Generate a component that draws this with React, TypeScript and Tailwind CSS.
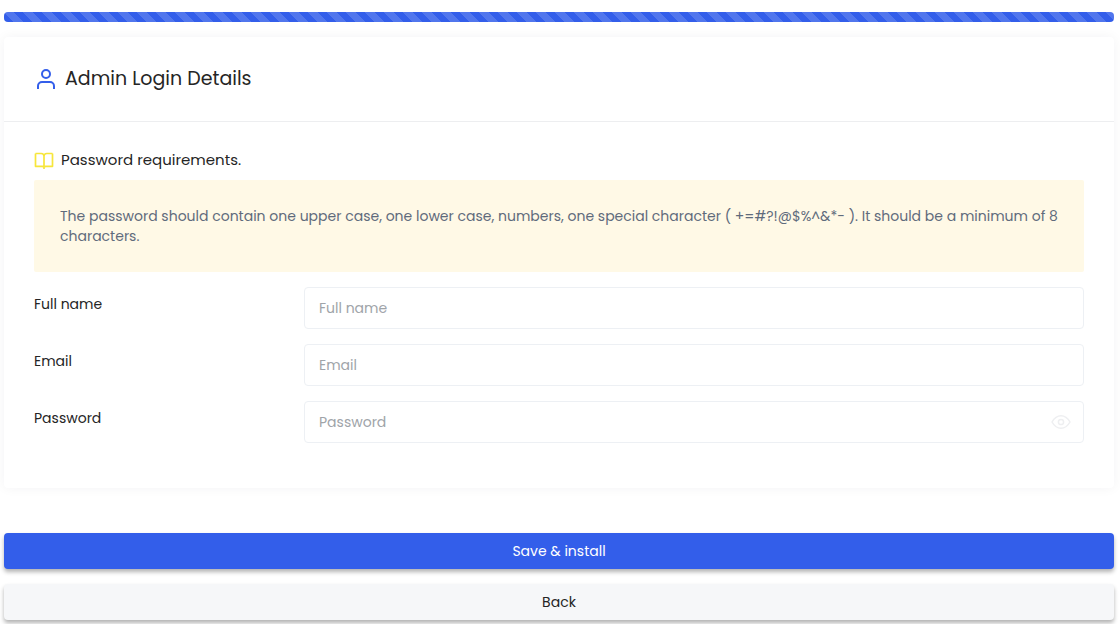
import { useState } from "react";

const fields = [
  { id: "name", label: "Full name", type: "text" },
  { id: "email", label: "Email", type: "email" },
  { id: "password", label: "Password", type: "password" },
];

function UserIcon() {
  return (
    <svg className="h-6 w-6 shrink-0 text-[#335eea]" viewBox="0 0 24 24" fill="none" stroke="currentColor" strokeWidth="2" aria-hidden="true">
      <circle cx="12" cy="7" r="4" />
      <path d="M4 22v-3a4 4 0 0 1 4-4h8a4 4 0 0 1 4 4v3" />
    </svg>
  );
}

function BookIcon() {
  return (
    <svg className="h-5 w-5 shrink-0 text-[#f7e63b]" viewBox="0 0 20 20" fill="none" stroke="currentColor" strokeWidth="1.7" strokeLinejoin="round" aria-hidden="true">
      <path d="M1.500 3.500h5.700Q10 3.500 10 6.200V19M18.500 3.500h-5.700Q10 3.500 10 6.200M1.500 3.500v12.800h7l1.500 1 1.500-1h7V3.500" />
    </svg>
  );
}

function EyeIcon() {
  return (
    <svg className="h-5 w-5" viewBox="0 0 20 20" fill="none" stroke="currentColor" strokeWidth="1.5" aria-hidden="true">
      <path d="M1 10c2-3.500 5-6.300 9-6.300s7 2.800 9 6.300c-2 3.500-5 6.300-9 6.300S3 13.500 1 10z" />
      <circle cx="10" cy="10" r="2.600" />
    </svg>
  );
}

export default function App() {
  const [visible, setVisible] = useState(false);
  return (
    <main className="bg-white pt-3 pr-1.5 pb-1 pl-1 font-['Poppins','Inter',sans-serif] text-sm leading-5 text-[#252525]">
      <div
        role="progressbar"
        aria-label="Installation progress"
        aria-valuenow={100}
        className="h-2.5 rounded bg-[#335eea] bg-[linear-gradient(45deg,rgba(255,255,255,.15)_25%,transparent_25%,transparent_50%,rgba(255,255,255,.15)_50%,rgba(255,255,255,.15)_75%,transparent_75%)] bg-[length:19px_19px]"
      />
      <form onSubmit={(e) => e.preventDefault()}>
        <section className="mt-[15px] rounded bg-white shadow-[0_0_12px_rgba(18,38,63,0.05)]">
          <header className="flex h-[85px] items-center gap-[7px] border-b border-[#edeef0] px-[30px]">
            <UserIcon />
            <h1 className="text-[19px] leading-6">Admin Login Details</h1>
          </header>
          <div className="px-[30px] pt-7 pb-[45px]">
            <h2 className="flex items-center gap-[7px] text-[15px] leading-5">
              <BookIcon />
              Password requirements.
            </h2>
            <p className="mt-[10px] rounded-xs bg-[#fff9e6] p-[26px] leading-5 text-[#5f6b7c]">
              The password should contain one upper case, one lower case, numbers, one special character ( +=#?!@$%^&amp;*- ). It should be a minimum of 8 characters.
            </p>
            <div className="mt-[15px] flex flex-col gap-[15px]">
              {fields.map((f) => (
                <div key={f.id} className="flex items-start">
                  <label htmlFor={f.id} className="w-[270px] shrink-0 pt-[7px]">
                    {f.label}
                  </label>
                  <div className="relative flex-1">
                    <input
                      id={f.id}
                      type={f.type === "password" && visible ? "text" : f.type}
                      placeholder={f.label}
                      className="block h-[42px] w-full rounded border border-[#edf0f4] bg-white px-3.5 placeholder:text-[#a0a4a9]"
                    />
                    {f.type === "password" && (
                      <button
                        type="button"
                        aria-label="Show password"
                        onClick={() => setVisible(!visible)}
                        className="absolute inset-y-0 right-[13px] text-[#eeeff1]"
                      >
                        <EyeIcon />
                      </button>
                    )}
                  </div>
                </div>
              ))}
            </div>
          </div>
        </section>
        <div className="mt-[45px] flex flex-col gap-[15px]">
          <button type="submit" className="h-9 rounded bg-[#335eea] text-white shadow-[0_3px_4px_rgba(0,0,0,0.3)]">
            Save &amp; install
          </button>
          <button type="button" className="h-9 rounded bg-[#f6f7f9] shadow-[0_3px_4px_rgba(0,0,0,0.3)]">
            Back
          </button>
        </div>
      </form>
    </main>
  );
}
